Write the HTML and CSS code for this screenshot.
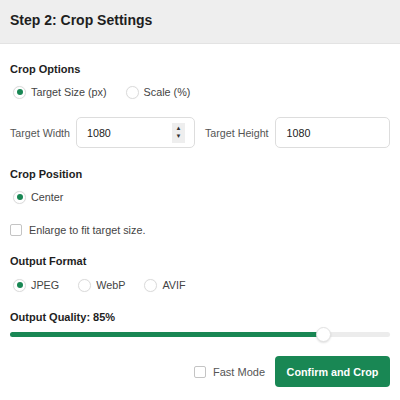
FILE: index.html
```html
<!DOCTYPE html>
<html lang="en">
<head>
<meta charset="utf-8">
<title>Crop Settings</title>
<link rel="stylesheet" href="styles.css">
</head>
<body>
<header class="head">
  <h1 class="title">Step 2: Crop Settings</h1>
</header>
<main class="content">
  <h2 class="heading first">Crop Options</h2>
  <div class="choices">
    <label class="choice"><span class="radio checked"></span>Target Size (px)</label>
    <label class="choice"><span class="radio"></span>Scale (%)</label>
  </div>

  <div class="dims">
    <span class="dim-label">Target Width</span>
    <div class="field field-w">
      <span class="field-value">1080</span>
      <span class="spinner"><span class="arrow">&#9650;</span><span class="arrow">&#9660;</span></span>
    </div>
    <span class="dim-label label-h">Target Height</span>
    <div class="field field-h">
      <span class="field-value">1080</span>
    </div>
  </div>

  <h2 class="heading">Crop Position</h2>
  <div class="choices">
    <label class="choice"><span class="radio checked"></span>Center</label>
  </div>

  <label class="check-row"><span class="checkbox"></span>Enlarge to fit target size.</label>

  <h2 class="heading heading-format">Output Format</h2>
  <div class="choices choices-format">
    <label class="choice"><span class="radio checked"></span>JPEG</label>
    <label class="choice"><span class="radio"></span>WebP</label>
    <label class="choice"><span class="radio"></span>AVIF</label>
  </div>

  <h2 class="heading heading-quality">Output Quality: 85%</h2>
  <div class="slider">
    <div class="track"><div class="fill" style="width: 82.5%"></div></div>
    <span class="thumb" style="left: 82.5%"></span>
  </div>

  <div class="actions">
    <label class="check-row fast"><span class="checkbox"></span>Fast Mode</label>
    <button class="confirm" type="button">Confirm and Crop</button>
  </div>
</main>
</body>
</html>
```

FILE: styles.css
```css
* {
  box-sizing: border-box;
}

html, body {
  margin: 0;
  padding: 0;
  background: #ffffff;
}

body {
  font-family: "Liberation Sans", Arial, sans-serif;
  color: #222222;
  width: 400px;
}

.head {
  height: 44px;
  background: #eeeeee;
  border-bottom: 1px solid #e3e3e3;
  display: flex;
  align-items: center;
  padding: 0 10px 4px;
}

.title {
  margin: 0;
  font-size: 14px;
  font-weight: bold;
  line-height: 18px;
  color: #1e1e1e;
}

.content {
  padding: 0 10px;
}

.heading {
  margin: 0;
  font-size: 11px;
  font-weight: bold;
  line-height: 14px;
  color: #1e1e1e;
}

.heading.first {
  margin-top: 18px;
}

.choices {
  display: flex;
  align-items: center;
  gap: 16px;
  margin-top: 8px;
  height: 16px;
}

.choices-format {
  margin-top: 9px;
}

.choice {
  display: flex;
  align-items: center;
  gap: 5px;
  font-size: 10.8px;
  color: #444444;
  line-height: 16px;
}

.radio {
  width: 13px;
  height: 13px;
  margin-left: 3px;
  border-radius: 50%;
  border: 1px solid #dcdcdc;
  background: #ffffff;
  display: flex;
  align-items: center;
  justify-content: center;
  box-shadow: 0 0 1px rgba(0, 0, 0, 0.08);
}

.radio.checked::after {
  content: "";
  width: 6px;
  height: 6px;
  border-radius: 50%;
  background: #198754;
}

.dims {
  display: flex;
  align-items: center;
  margin-top: 17px;
  margin-bottom: 19px;
}

.dim-label {
  font-size: 10.7px;
  color: #555555;
  margin-right: 6px;
}

.label-h {
  margin-left: 10px;
}

.field {
  height: 31px;
  border: 1px solid #dddddd;
  border-radius: 5px;
  background: #ffffff;
  display: flex;
  align-items: center;
  padding: 0 9px 0 10px;
  font-size: 10.7px;
  color: #222222;
}

.field-w {
  width: 119px;
}

.field-h {
  flex: 1;
  padding-left: 11px;
}

.field-value {
  flex: 1;
}

.spinner {
  width: 13px;
  height: 20px;
  background: #eeeeee;
  display: flex;
  flex-direction: column;
  align-items: center;
  justify-content: center;
  gap: 1px;
}

.arrow {
  font-size: 6px;
  line-height: 7px;
  color: #333333;
}

.check-row {
  display: flex;
  align-items: center;
  gap: 7px;
  font-size: 10.8px;
  color: #444444;
  line-height: 16px;
  margin-top: 17px;
}

.checkbox {
  width: 12px;
  height: 12px;
  border: 1px solid #c4c4c4;
  border-radius: 2px;
  background: #ffffff;
}

.heading-format {
  margin-top: 16px;
}

.heading-quality {
  margin-top: 17px;
}

.slider {
  position: relative;
  height: 14px;
  margin-top: 3px;
  display: flex;
  align-items: center;
}

.track {
  width: 100%;
  height: 5px;
  border-radius: 3px;
  background: #ececec;
  overflow: hidden;
}

.fill {
  height: 100%;
  background: #198754;
}

.thumb {
  position: absolute;
  top: 0;
  width: 15px;
  height: 15px;
  margin-left: -8px;
  border-radius: 50%;
  background: #ffffff;
  border: 1px solid #e2e2e2;
  box-shadow: 0 1px 2px rgba(0, 0, 0, 0.12);
}

.actions {
  display: flex;
  justify-content: flex-end;
  align-items: center;
  gap: 10px;
  margin-top: 15px;
}

.fast {
  margin-top: 0;
  gap: 7px;
  font-size: 11px;
  color: #555555;
}

.confirm {
  width: 115px;
  height: 31px;
  border: none;
  border-radius: 4px;
  background: #198754;
  color: #ffffff;
  font-family: "Liberation Sans", Arial, sans-serif;
  font-size: 10.8px;
  font-weight: bold;
  padding: 0;
}
```
